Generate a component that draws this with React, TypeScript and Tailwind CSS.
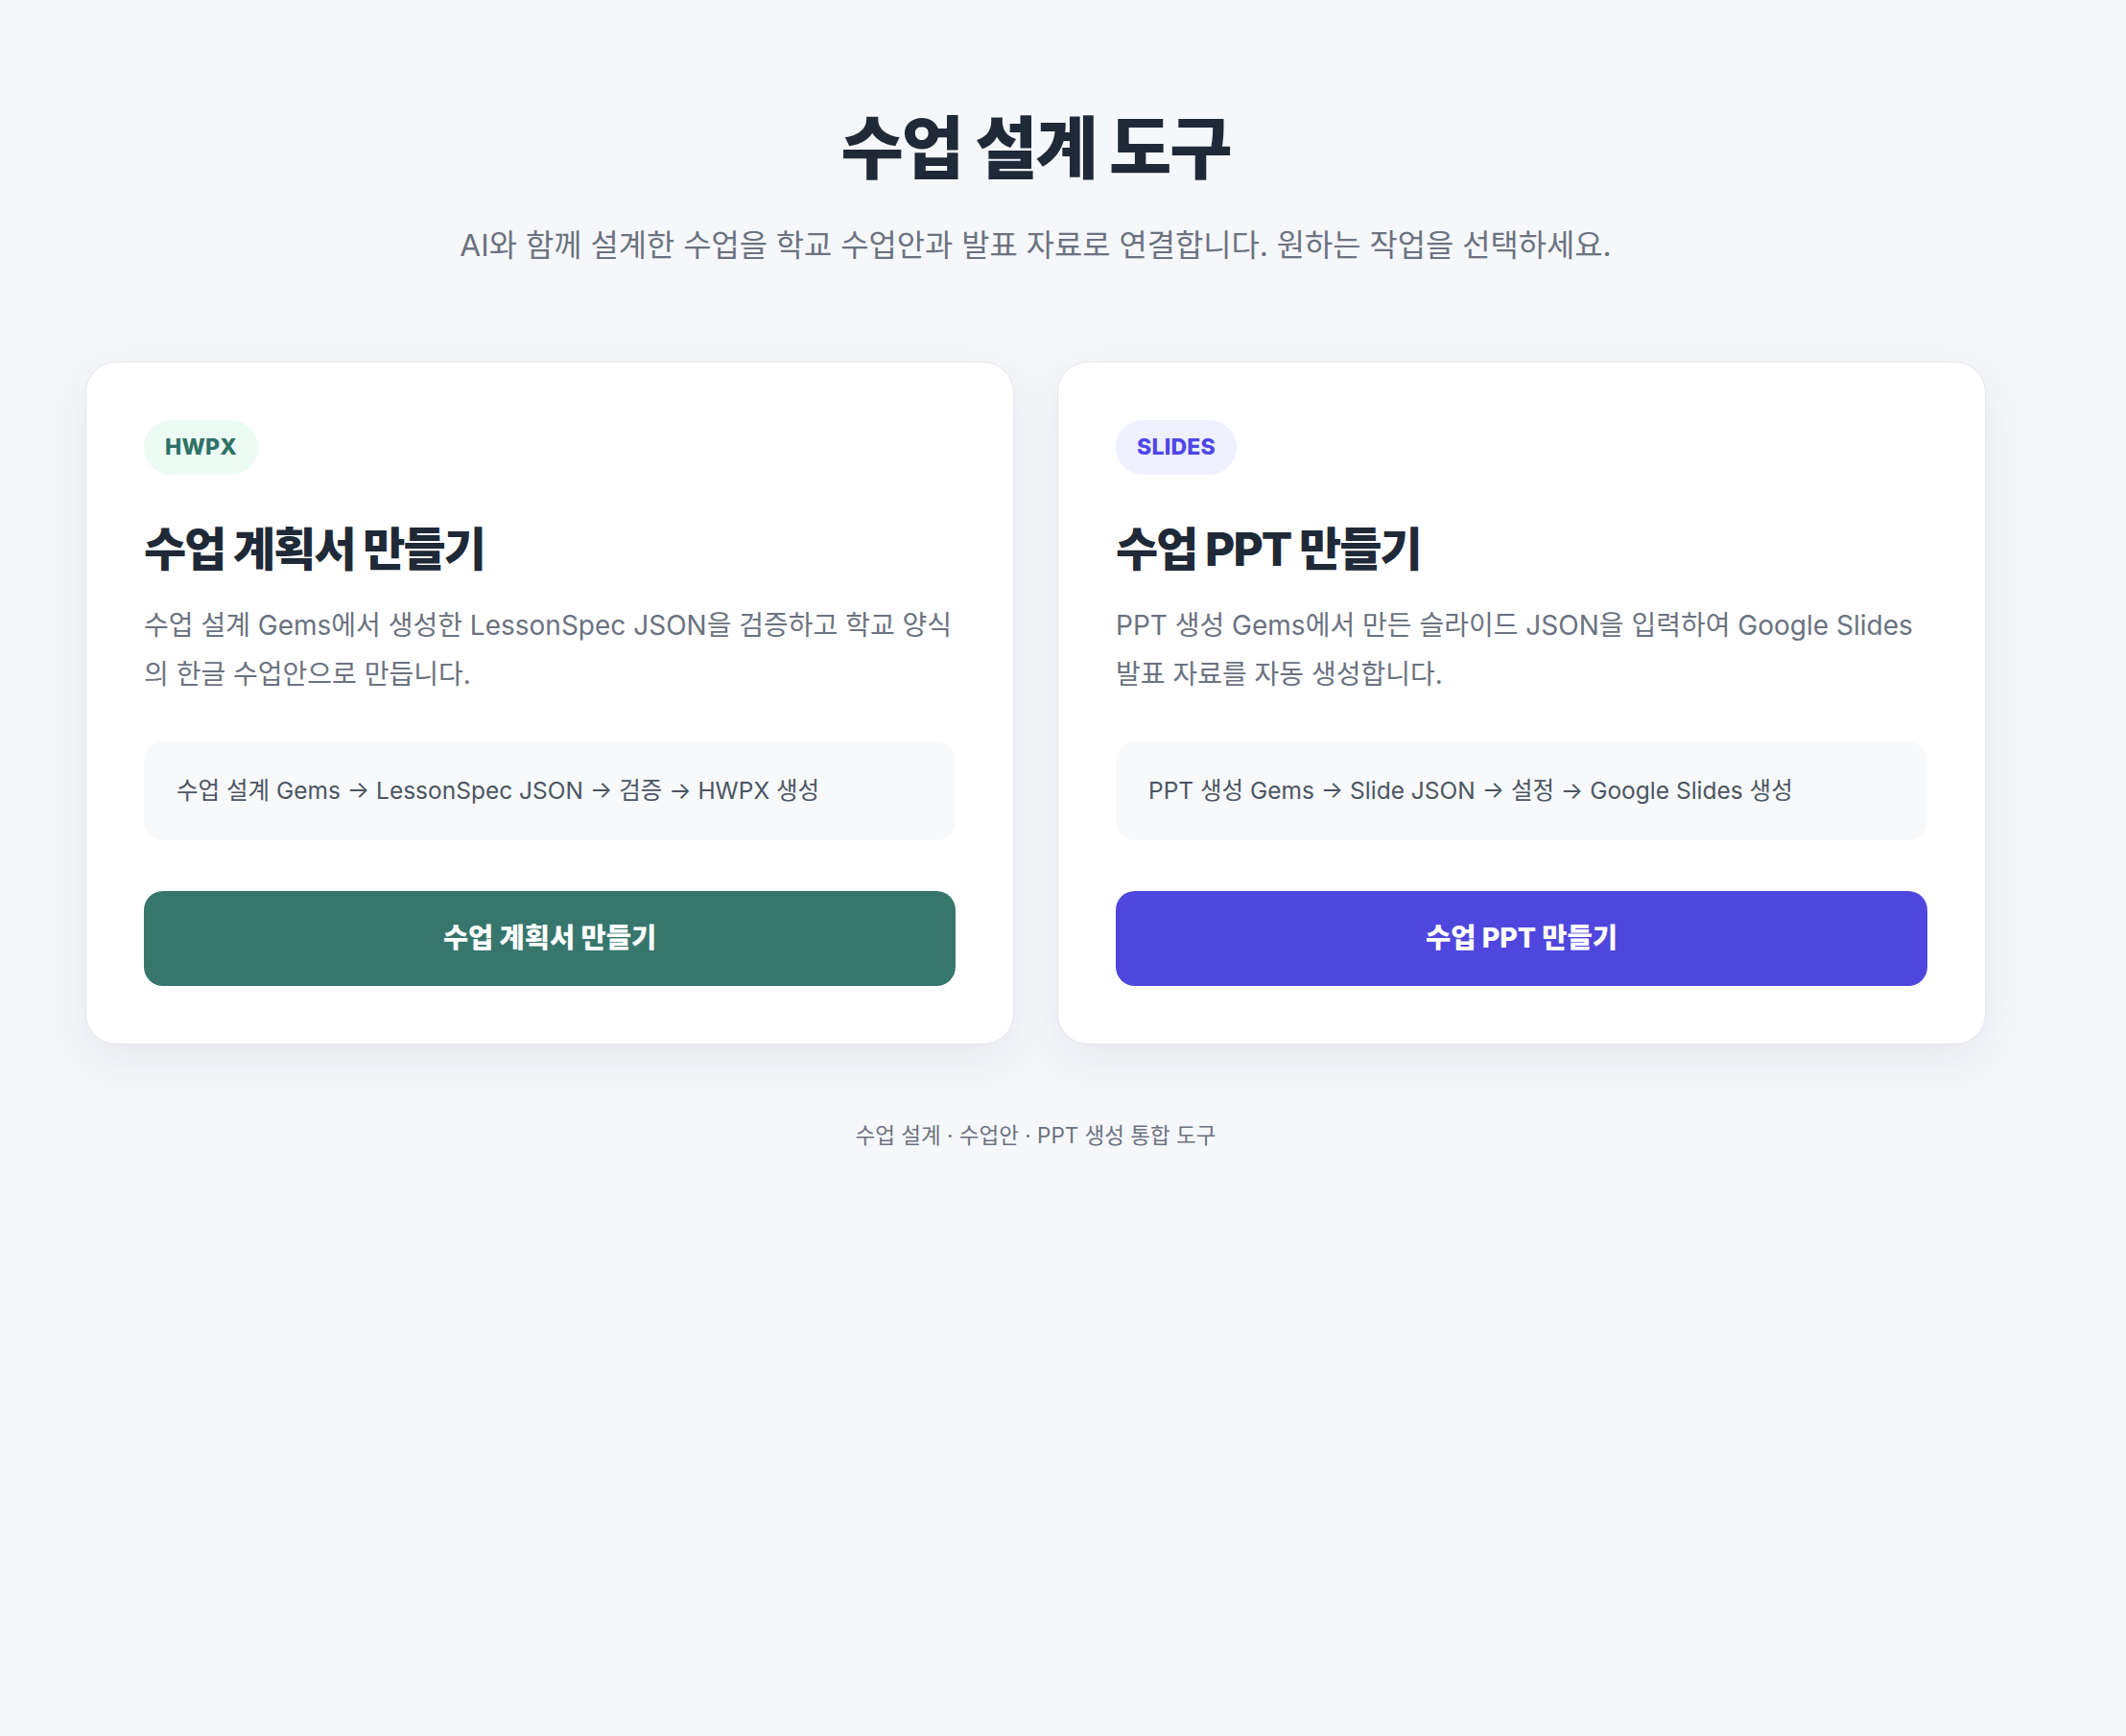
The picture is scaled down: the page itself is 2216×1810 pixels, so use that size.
import React from 'react';

const tools = [
  {
    badge: 'HWPX',
    badgeClass: 'bg-[#ecfbf4] text-[#2f7167]',
    title: '수업 계획서 만들기',
    desc: '수업 설계 Gems에서 생성한 LessonSpec JSON을 검증하고 학교 양식의 한글 수업안으로 만듭니다.',
    flow: '수업 설계 Gems → LessonSpec JSON → 검증 → HWPX 생성',
    button: '수업 계획서 만들기',
    buttonClass: 'bg-[#37766d] hover:bg-[#2f675f]',
  },
  {
    badge: 'SLIDES',
    badgeClass: 'bg-[#eef0fe] text-[#4f46e5]',
    title: '수업 PPT 만들기',
    desc: 'PPT 생성 Gems에서 만든 슬라이드 JSON을 입력하여 Google Slides 발표 자료를 자동 생성합니다.',
    flow: 'PPT 생성 Gems → Slide JSON → 설정 → Google Slides 생성',
    button: '수업 PPT 만들기',
    buttonClass: 'bg-[#4f47dd] hover:bg-[#4338ca]',
  },
];

export default function App() {
  return (
    <div className="min-h-screen bg-[#f6f7fb] font-['Inter','Noto_Sans_CJK_KR',sans-serif]">
      <div className="ml-[89px] w-[1981px] pt-[113px] pb-20">
        <header className="text-center">
          <h1 className="text-[71px] leading-[82px] font-extrabold tracking-[-0.03em] text-[#1f2937]">
            수업 설계 도구
          </h1>
          <p className="mt-[39px] text-[31.8px] leading-[44px] text-[#6b7280]">
            AI와 함께 설계한 수업을 학교 수업안과 발표 자료로 연결합니다. 원하는 작업을 선택하세요.
          </p>
        </header>

        <div className="mt-[99px] grid grid-cols-2 gap-[45px]">
          {tools.map((tool) => (
            <div
              key={tool.badge}
              className="flex flex-col rounded-[32px] border border-[#e5e7eb] bg-white p-[60px] shadow-[0_16px_48px_rgba(17,24,39,0.07)]"
            >
              <div>
                <span
                  className={`inline-flex h-[57px] items-center rounded-full px-[22px] text-[23px] font-extrabold tracking-[0.01em] ${tool.badgeClass}`}
                >
                  {tool.badge}
                </span>
              </div>
              <h2 className="mt-[48px] text-[48px] leading-[59px] font-extrabold tracking-[-0.04em] text-[#1f2937]">
                {tool.title}
              </h2>
              <p className="mt-[25px] text-[28px] leading-[51px] text-[#6b7280]">{tool.desc}</p>
              <div className="mt-[44px] flex h-[103px] items-center rounded-[20px] bg-[#f8f9fb] px-[34px] text-[24.5px] text-[#4b5563]">
                {tool.flow}
              </div>
              <button
                className={`mt-[53px] h-[99px] w-full rounded-[20px] text-[28.5px] font-extrabold text-white transition-colors ${tool.buttonClass}`}
              >
                {tool.button}
              </button>
            </div>
          ))}
        </div>

        <p className="mt-[78px] text-center text-[22.5px] leading-[1.5] text-[#6b7280]">
          수업 설계 · 수업안 · PPT 생성 통합 도구
        </p>
      </div>
    </div>
  );
}
